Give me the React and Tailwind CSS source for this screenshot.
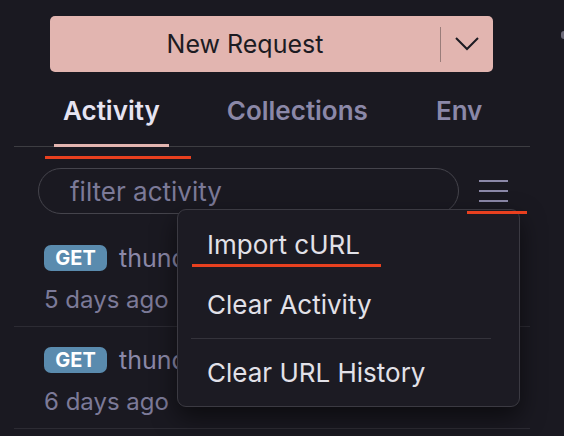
import React from "react";

const font = { fontFamily: "Inter, 'Noto Sans', sans-serif" };

const ActivityRow = ({ when }) => (
  <div className="border-b border-[#2c2b33] pl-[30px] pt-[20px] pb-[11px]">
    <div className="flex items-center gap-[12px] h-[26px]">
      <span className="h-[26px] w-[63px] rounded-[7px] bg-[#5a8bae] text-white text-[20px] leading-[26px] font-bold flex items-center justify-center">
        GET
      </span>
      <span className="text-[25px] leading-[26px] text-[#8b88a8] whitespace-nowrap">thunderclient.com/welcome</span>
    </div>
    <div className="mt-[14px] text-[24px] leading-[30px] text-[#7c7a98]">{when}</div>
  </div>
);

const MenuItem = ({ children }) => (
  <div className="px-[29px] text-[26px] leading-[32px] text-[#e2e1e8]">{children}</div>
);

export default function App() {
  return (
    <div style={font} className="relative w-[564px] h-[436px] overflow-hidden bg-[#1a1921]">
      <div className="w-[530px] pl-[14px] pt-[16px]">
        {/* New request button */}
        <div className="ml-[36px] w-[443px] h-[56px] rounded-[5px] bg-[#e2b5b0] flex items-center">
          <div className="flex-1 text-center text-[25px] leading-[32px] text-[#1c1b22]">New Request</div>
          <div className="w-px h-[35px] bg-[#9a7d7a]" />
          <div className="w-[52px] flex justify-center">
            <svg width="24" height="14" viewBox="0 0 24 14" fill="none" stroke="#1c1b22" strokeWidth="2">
              <path d="M1 1l11 11L23 1" />
            </svg>
          </div>
        </div>

        {/* Tabs */}
        <div className="mt-[23px] flex border-b border-[#3d3d42] text-[26px] leading-[32px] font-semibold">
          <div className="ml-[40px] px-[9px] pb-[17px] border-b-[3px] border-[#e2b5b0] text-[#e6e4f2] -mb-px">Activity</div>
          <div className="ml-[49px] px-[9px] pb-[17px] text-[#8b88a8]">Collections</div>
          <div className="ml-[50px] px-[9px] pb-[17px] text-[#8b88a8]">Env</div>
        </div>

        {/* Filter */}
        <div className="mt-[21px] flex items-center">
          <div className="ml-[24px] w-[421px] h-[46px] rounded-full border border-[#45444c] flex items-center pl-[31px] text-[26px] text-[#7c7a98]">
            filter activity
          </div>
          <div className="ml-[20px] w-[29px] flex flex-col gap-[8px]">
            <div className="h-[2px] bg-[#8b88a8]" />
            <div className="h-[2px] bg-[#8b88a8]" />
            <div className="h-[2px] bg-[#8b88a8]" />
          </div>
        </div>

        {/* Activity list */}
        <div className="mt-[11px]">
          <ActivityRow when="5 days ago" />
          <ActivityRow when="6 days ago" />
        </div>
      </div>

      <div className="absolute left-[561px] top-[31px] w-[6px] h-[8px] rounded-full bg-[#6a6878]" />

      {/* Annotation lines */}
      <div className="absolute left-[45px] top-[156px] w-[146px] h-[3px] bg-[#e8401f]" />
      <div className="absolute left-[467px] top-[211px] w-[60px] h-[3px] bg-[#e8401f] z-20" />

      {/* Dropdown menu */}
      <div className="absolute left-[177px] top-[209px] w-[343px] h-[198px] rounded-[9px] border border-[#3b3a42] bg-[#1c1b23] shadow-[0_10px_24px_rgba(0,0,0,0.55)] z-10 pt-[19px]">
        <MenuItem>Import cURL</MenuItem>
        <div className="mt-[28px]">
          <MenuItem>Clear Activity</MenuItem>
        </div>
        <div className="ml-[13px] mr-[28px] mt-[17px] h-px bg-[#34333b]" />
        <div className="mt-[18px]">
          <MenuItem>Clear URL History</MenuItem>
        </div>
      </div>
      <div className="absolute left-[192px] top-[264px] w-[189px] h-[3px] bg-[#e8401f] z-20" />
    </div>
  );
}
